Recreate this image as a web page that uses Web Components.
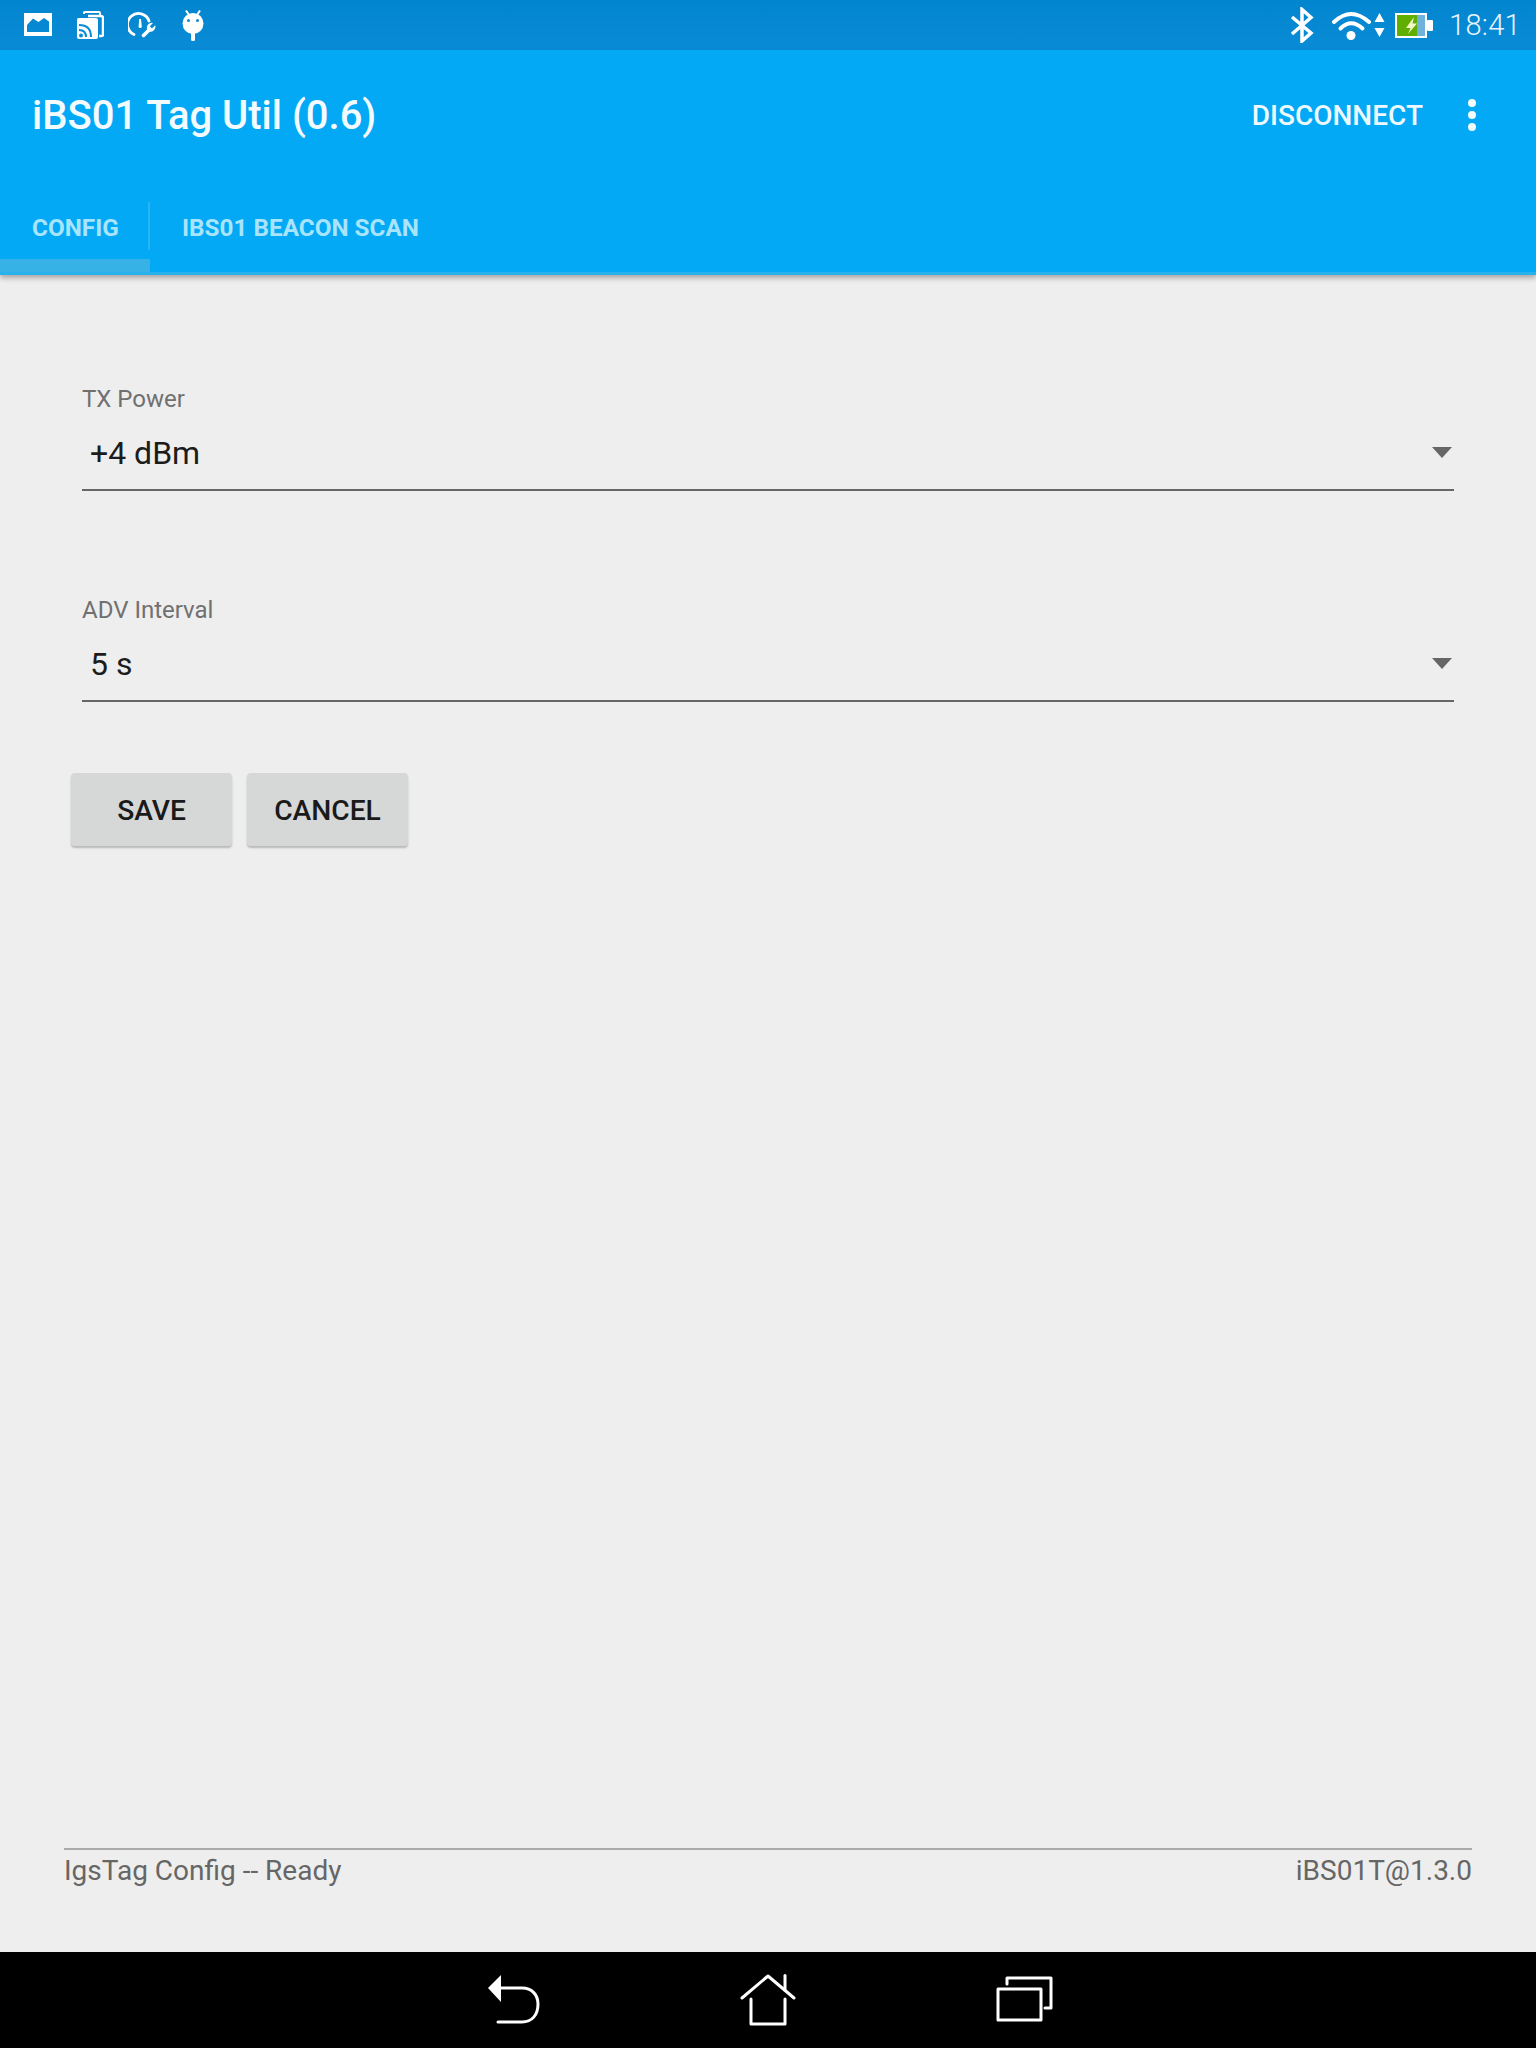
<!DOCTYPE html>
<html lang="en"><head><meta charset="utf-8"><title>iBS01 Tag Util</title>
<style>
html,body{margin:0;padding:0;background:#eee}
body{width:1536px;height:2048px;overflow:hidden;font-family:Roboto,"Liberation Sans",sans-serif}
</style></head><body>
<app-screen>
  <status-bar slot="status" time="18:41"></status-bar>
  <app-bar slot="bar" title-text="iBS01 Tag Util (0.6)" action="DISCONNECT">
    <app-tab active>CONFIG</app-tab>
    <app-tab>IBS01 BEACON SCAN</app-tab>
  </app-bar>
  <config-form slot="main">
    <spinner-field label="TX Power" value="+4 dBm"></spinner-field>
    <spinner-field label="ADV Interval" value="5 s"></spinner-field>
    <button-row>
      <raised-button>SAVE</raised-button>
      <raised-button>CANCEL</raised-button>
    </button-row>
  </config-form>
  <status-footer slot="main" left="IgsTag Config -- Ready" right="iBS01T@1.3.0"></status-footer>
  <nav-bar slot="nav"></nav-bar>
</app-screen>
<script>
function def(name, css, html){
  customElements.define(name, class extends HTMLElement{
    constructor(){super();this.attachShadow({mode:'open'});}
    connectedCallback(){
      const a=n=>this.getAttribute(n)||'';
      this.shadowRoot.innerHTML='<style>'+css+'</style>'+(typeof html==='function'?html(a):html);
    }
  });
}
def('app-screen',
 ':host{display:flex;flex-direction:column;width:1536px;height:2048px;background:#eee}'+
 'main{flex:1;display:flex;flex-direction:column;min-height:0}',
 '<slot name="status"></slot><slot name="bar"></slot><main><slot name="main"></slot></main><slot name="nav"></slot>');

def('status-bar',
 ':host{display:flex;align-items:center;height:50px;flex:none;background:linear-gradient(#0285cf,#0a8bd6);color:#fff;box-sizing:border-box;position:relative}'+
 'svg{display:block;flex:none}.l{display:flex;align-items:center;margin-left:24px}.r{display:flex;align-items:center;margin-left:auto;padding-right:15px}'+
 '.t{font-size:29px;font-weight:300;letter-spacing:.3px;margin-left:16px;line-height:50px;color:#e8f5fd}',
 a=>`<div class="l">
 <svg width="28" height="23" viewBox="0 0 28 23" style="margin-top:-1px"><path fill="#fff" fill-rule="evenodd" d="M0 0H28V23H0ZM3 19H25V8.500L20 5L14.500 9L9 5.500L3 12Z"/></svg>
 <svg width="27" height="28" viewBox="0 0 27 28" style="margin-left:25px"><g fill="none" stroke="#fff"><path stroke-width="2" d="M7 3V1.500Q7 1 8 1H22Q23 1 23 2V4"/><path stroke-width="2.500" d="M11 5H24Q26 5 26 7V24Q26 25 24 25H22"/></g><path fill="#fff" d="M1.500 7H19Q21 7 21 9V26Q21 28 19 28H2Q0 28 0 26V9Q0 7 1.500 7Z"/><g fill="none" stroke="#0a8bd6" stroke-width="2"><path d="M2 14Q14 14 14 26"/><path d="M2 19Q9 19 9 26"/></g><circle cx="4" cy="24.500" r="2" fill="#0a8bd6"/></svg>
 <svg width="28" height="26" viewBox="0 0 28 26" style="margin-left:24px"><path fill="none" stroke="#fff" stroke-width="2.800" stroke-linecap="round" d="M6 22.500A11 11 0 1 1 21 9"/><path fill="#fff" d="M11.200 7H13L13.800 14.500A1.600 1.600 0 0 1 10.600 14.500Z"/><path fill="none" stroke="#fff" stroke-width="3.500" stroke-linecap="round" d="M15.500 23.500L21.500 17.500"/><path fill="#fff" d="M19 17A5 5 0 0 1 25 11L21.800 14.200L24 16.500L27.200 13.300A5 5 0 0 1 21 19.500Z"/></svg>
 <svg width="22" height="31" viewBox="0 0 22 31" style="margin-left:26px"><path stroke="#fff" stroke-width="2" d="M4 0.500L7 5M18 0.500L15 5"/><ellipse cx="11" cy="13.500" rx="10.500" ry="10.500" fill="#fff"/><rect x="9" y="22" width="4" height="9" rx="1.500" fill="#fff"/><circle cx="6.500" cy="10.500" r="1.500" fill="#0a8bd6"/><circle cx="15.500" cy="10.500" r="1.500" fill="#0a8bd6"/></svg>
 </div>
 <div class="r">
 <svg width="24" height="36" viewBox="0 0 24 36"><path fill="none" stroke="#fff" stroke-width="3.500" stroke-linejoin="miter" d="M2 10L21 26L12 34V2.500L21 10.500L2 27"/></svg>
 <svg width="40" height="32" viewBox="0 0 40 32" style="margin-left:18px"><g fill="none" stroke="#fff" stroke-width="4" stroke-linecap="round"><path d="M2 13Q19 -3 37 13"/><path d="M8.500 19.500Q19 9 30.500 19.500"/></g><circle cx="19" cy="26.500" r="4.500" fill="#fff"/></svg>
 <svg width="11" height="24" viewBox="0 0 11 24" style="margin-left:2px"><path fill="#fff" d="M5.500 0L10.500 9H0.500ZM0.500 15H10.500L5.500 24Z"/></svg>
 <svg width="38" height="25" viewBox="0 0 38 25" style="margin-left:10px"><rect x="1" y="1" width="30" height="23" fill="#6fb3dc" stroke="#fff" stroke-width="2"/><rect x="2" y="2" width="20" height="21" fill="#5fae00"/><rect x="32" y="7" width="6" height="11" rx="1" fill="#fff"/><path fill="#f4f8c8" d="M19 4L11 15H15.500L13 21L22 10.500H17.500Z"/></svg>
 <span class="t">${a('time')}</span></div>`);

def('app-bar',
 ':host{display:flex;flex-direction:column;flex:none;height:225px;background:#03a9f5;color:#fff;box-sizing:border-box;box-shadow:0 3px 5px rgba(0,0,0,.3);position:relative;z-index:1;border-bottom:3px solid #29b1ec}'+
 '.top{display:flex;align-items:center;height:130px;padding:0 0 0 32px;box-sizing:border-box;flex:none}'+
 '.ti{font-size:40px;font-weight:500;color:#f4fbff;padding-top:1px}.ac{margin-left:auto;font-size:28px;font-weight:500;color:#eef9ff}'+
 '.more{display:flex;flex-direction:column;gap:4px;margin:0 60px 0 45px}.more i{display:block;width:8px;height:8px;border-radius:50%;background:#f4fbff}'+
 '.tabs{display:flex;flex:1;min-height:0;align-items:stretch}',
 a=>`<div class="top"><span class="ti">${a('title-text')}</span><span class="ac">${a('action')}</span><div class="more"><i></i><i></i><i></i></div></div><div class="tabs"><slot></slot></div>`);

def('app-tab',
 ':host{display:flex;flex-direction:column;position:relative;box-sizing:border-box;padding:0 32px;color:#a8e4fb;font-size:24.3px;font-weight:700;height:100%;line-height:1}'+
 '.x{margin-top:36px;white-space:nowrap}'+
 ':host([active]){background:linear-gradient(#03a9f5 0,#03a9f5 79px,#36b2e6 79px);width:150px;padding:0 0 0 32px}'+
 ':host([active])::after{content:"";position:absolute;right:0;top:22px;height:48px;width:2px;background:#2bb4f3}',
 '<span class="x"><slot></slot></span>');

def('config-form',
 ':host{display:flex;flex-direction:column;padding:8px 82px 0;flex:none}',
 '<slot></slot>');

def('spinner-field',
 ':host{display:flex;flex-direction:column;height:211px;padding-top:101px;box-sizing:border-box;flex:none}'+
 '.lb{font-size:24px;line-height:30px;color:#707070;height:30px;flex:none}'+
 '.row{display:flex;align-items:center;height:77px;box-sizing:border-box;padding:2px 2px 0 8px;flex:none;border-bottom:2px solid #666;font-size:32px;color:#1c1c1c}'+
 'svg{margin-left:auto;display:block;margin-top:-1px}',
 a=>`<div class="lb">${a('label')}</div><div class="row"><span>${a('value')}</span><svg width="20" height="11" viewBox="0 0 20 11"><path fill="#666" d="M0 0H20L10 11Z"/></svg></div>`);

def('button-row',
 ':host{display:flex;gap:15px;margin:68px 0 0 -11px;flex:none}',
 '<slot></slot>');

def('raised-button',
 ':host{display:flex;align-items:center;justify-content:center;width:161px;height:73px;padding-top:1px;box-sizing:border-box;background:#d6d7d7;border-radius:4px;box-shadow:0 2px 2px rgba(0,0,0,.22);font-size:28.2px;font-weight:500;color:#1a1a1a;flex:none}',
 '<slot></slot>');

def('status-footer',
 ':host{display:flex;justify-content:space-between;margin:auto 64px 0;border-top:2px solid #aaa;height:104px;padding-top:1px;box-sizing:border-box;font-size:28px;line-height:40px;color:#666;flex:none}',
 a=>`<span>${a('left')}</span><span>${a('right')}</span>`);

def('nav-bar',
 ':host{display:flex;align-items:center;justify-content:center;height:96px;background:#000;flex:none;padding-left:4px;box-sizing:border-box}'+
 'svg{display:block;flex:none}',
 `<svg width="52" height="49" viewBox="0 0 52 49" style="margin-top:-1px"><path fill="#fff" d="M0 13L13 0V27Z"/><path fill="none" stroke="#fff" stroke-width="3" stroke-linecap="round" d="M12 13H34C44 13 50 20 50 29C50 40 44 47 34 47H10"/></svg>
 <svg width="56" height="52" viewBox="0 0 56 52" style="margin:-1px 0 0 200px"><g fill="none" stroke="#fff" stroke-width="3" stroke-linecap="round" stroke-linejoin="round"><path d="M2 24L28 2L54 24"/><path d="M45 1.500V16"/><path d="M11 25V50H45V25"/></g></svg>
 <svg width="57" height="46" viewBox="0 0 57 46" style="margin:-2px 0 0 200px"><g fill="none" stroke="#fff" stroke-width="3" stroke-linejoin="round" stroke-linecap="round"><rect x="2" y="13" width="43" height="31"/><path d="M11 8V2H55V32H49"/></g></svg>`);
</script>
</body></html>
